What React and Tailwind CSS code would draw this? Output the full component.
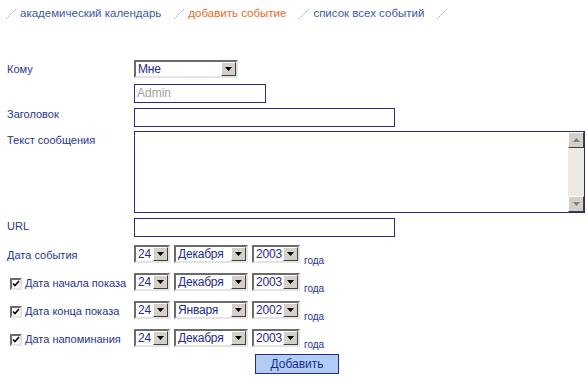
import React from 'react';

const Slash = () => (
  <svg width="12" height="12" viewBox="0 0 12 12" className="shrink-0">
    <line x1="1" y1="11" x2="11" y2="1" stroke="#9aa3b8" strokeWidth="1" strokeDasharray="1.5 1" />
  </svg>
);

const Arrow = () => (
  <div className="w-[15px] h-[14px] shrink-0 bg-[#d4d0c8] border border-t-white border-l-white border-r-[#404040] border-b-[#404040] flex items-center justify-center">
    <svg width="7" height="4" viewBox="0 0 7 4">
      <path d="M0 0h7L3.5 4z" fill="#000" />
    </svg>
  </div>
);

const Select = ({ value, w }) => (
  <div
    className={`${w} h-[18px] shrink-0 flex items-center bg-white border-2 border-t-[#6b6b6b] border-l-[#6b6b6b] border-b-[#e4e4e4] border-r-[#e4e4e4]`}
  >
    <span className="flex-1 min-w-0 pl-[2px] text-[12px] tracking-[-0.2px] leading-none text-[#1e2a8c] whitespace-nowrap overflow-hidden">{value}</span>
    <Arrow />
  </div>
);

const Check = () => (
  <div className="w-[12px] h-[12px] shrink-0 bg-white border-2 border-t-[#6b6b6b] border-l-[#6b6b6b] border-b-[#e4e4e4] border-r-[#e4e4e4] flex items-center justify-center">
    <svg width="8" height="8" viewBox="0 0 8 8">
      <path d="M1 3.5l2 2 4-4.5" stroke="#000" strokeWidth="1.6" fill="none" />
    </svg>
  </div>
);

const DateRow = ({ label, check, day, month, year, mt }) => (
  <div className={`flex items-center h-[18px] ${mt}`}>
    <div className={`w-[127px] shrink-0 flex items-center gap-[3px] pt-[3px] leading-none ${check ? 'pl-[3px]' : ''}`}>
      {check && <Check />}
      <span className="whitespace-nowrap">{label}</span>
    </div>
    <div className="flex items-center gap-[4px] h-[18px]">
      <Select value={day} w="w-[36px]" />
      <Select value={month} w="w-[74px]" />
      <Select value={year} w="w-[48px]" />
      <span className="text-[10px] leading-none self-end -mb-[3px]">года</span>
    </div>
  </div>
);

const input = 'h-[19px] bg-white border border-[#2a2a80]';

export default function App() {
  return (
    <div className="w-[588px] h-[381px] bg-white text-[11px] text-[#1e3590] overflow-hidden" style={{ fontFamily: '"Liberation Sans", Arial, sans-serif' }}>
      <div className="flex items-center gap-[3px] pl-[5px] pt-[5px] text-[11.5px] text-[#3c59a8]">
        <Slash />
        <span>академический календарь</span>
        <span className="w-[6px]" />
        <Slash />
        <span className="text-[#e8691e]">добавить событие</span>
        <span className="w-[6px]" />
        <Slash />
        <span>список всех событий</span>
        <span className="w-[6px]" />
        <Slash />
      </div>

      <div className="pl-[7px] mt-[38px]">
        <div className="flex">
          <div className="w-[127px] shrink-0 pt-[1px]">Кому</div>
          <Select value="Мне" w="w-[104px]" />
        </div>
        <div className="flex mt-[6px]">
          <div className="w-[127px] shrink-0" />
          <div className={`${input} w-[132px] h-[18px] text-[12px] text-[#a0a0a0] pl-[2px] leading-[16px]`}>Admin</div>
        </div>
        <div className="flex mt-[5px]">
          <div className="w-[127px] shrink-0 -mt-[2px]">Заголовок</div>
          <div className={`${input} w-[261px]`} />
        </div>
        <div className="flex mt-[4px]">
          <div className="w-[127px] shrink-0 pt-[1px]">Текст сообщения</div>
          <div className="w-[451px] h-[82px] bg-white border border-[#2a2a80] flex justify-end">
            <div className="w-[16px] h-full bg-[#ece9e4] flex flex-col justify-between">
              <div className="h-[16px] bg-[#d4d0c8] border border-t-white border-l-white border-r-[#404040] border-b-[#404040] flex items-center justify-center">
                <svg width="7" height="4" viewBox="0 0 7 4"><path d="M0 4h7L3.5 0z" fill="#808080" /></svg>
              </div>
              <div className="h-[16px] bg-[#d4d0c8] border border-t-white border-l-white border-r-[#404040] border-b-[#404040] flex items-center justify-center">
                <svg width="7" height="4" viewBox="0 0 7 4"><path d="M0 0h7L3.5 4z" fill="#808080" /></svg>
              </div>
            </div>
          </div>
        </div>
        <div className="flex mt-[5px]">
          <div className="w-[127px] shrink-0">URL</div>
          <div className={`${input} w-[261px]`} />
        </div>

        <DateRow label="Дата события" day="24" month="Декабря" year="2003" mt="mt-[8px]" />
        <DateRow label="Дата начала показа" check day="24" month="Декабря" year="2003" mt="mt-[10px]" />
        <DateRow label="Дата конца показа" check day="24" month="Января" year="2002" mt="mt-[10px]" />
        <DateRow label="Дата напоминания" check day="24" month="Декабря" year="2003" mt="mt-[10px]" />

        <div className="flex mt-[7px]">
          <div className="w-[248px] shrink-0" />
          <button className="w-[84px] h-[20px] bg-[#b1cdf5] border border-[#2a2a80] text-[12px] text-[#1e2a8c]">Добавить</button>
        </div>
      </div>
    </div>
  );
}
